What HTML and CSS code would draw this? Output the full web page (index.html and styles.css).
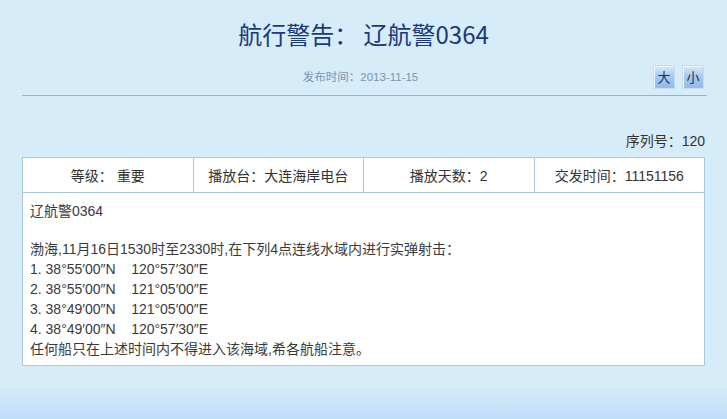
FILE: index.html
```html
<!DOCTYPE html>
<html lang="zh">
<head>
<meta charset="utf-8">
<title>航行警告： 辽航警0364</title>
<link rel="stylesheet" href="styles.css">
</head>
<body>
<div class="page">
  <h1 class="title">航行警告： 辽航警0364</h1>
  <div class="meta">
    <span class="date">发布时间：2013-11-15</span>
    <div class="sizes">
      <button class="size-btn">大</button>
      <button class="size-btn">小</button>
    </div>
  </div>
  <div class="serial">序列号：120</div>
  <table class="notice">
    <tr class="head">
      <td>等级： 重要</td>
      <td>播放台：大连海岸电台</td>
      <td>播放天数：2</td>
      <td>交发时间：11151156</td>
    </tr>
    <tr>
      <td colspan="4" class="body">
        <p class="code">辽航警0364</p>
        <p>渤海,11月16日1530时至2330时,在下列4点连线水域内进行实弹射击：<br>
        1. 38°55′00″N&nbsp;&nbsp;&nbsp;&nbsp;120°57′30″E<br>
        2. 38°55′00″N&nbsp;&nbsp;&nbsp;&nbsp;121°05′00″E<br>
        3. 38°49′00″N&nbsp;&nbsp;&nbsp;&nbsp;121°05′00″E<br>
        4. 38°49′00″N&nbsp;&nbsp;&nbsp;&nbsp;120°57′30″E<br>
        任何船只在上述时间内不得进入该海域,希各航船注意。</p>
      </td>
    </tr>
  </table>
</div>
</body>
</html>
```

FILE: styles.css
```css
html, body {
  margin: 0;
  height: 100%;
}
body {
  background: linear-gradient(to bottom, #d6ecf9 0, #d6ecf9 385px, #c0dcf8 419px);
  font-family: "Liberation Sans", Arial, "Noto Sans CJK SC", sans-serif;
  color: #333;
}
.page {
  padding: 0 22px 0 22px;
}
.title {
  margin: 0;
  padding-top: 18px;
  height: 32px;
  line-height: 32px;
  text-align: center;
  font-size: 24px;
  font-weight: normal;
  color: #1a3a7c;
  font-family: "Noto Sans CJK SC", "Liberation Sans", sans-serif;
}
.meta {
  position: relative;
  margin-top: 16px;
  height: 29px;
  border-bottom: 1px solid #8db4d8;
  text-align: center;
  margin-right: -2px;
}
.date {
  display: inline-block;
  font-size: 11.5px;
  line-height: 16px;
  color: #7896b2;
  margin-left: -8px;
  padding-top: 3px;
}
.sizes {
  position: absolute;
  right: 3px;
  top: -1px;
  display: flex;
  gap: 7px;
}
.size-btn {
  width: 22px;
  height: 24px;
  padding: 0;
  border: 1px solid #c6dcf0;
  background: linear-gradient(to bottom, #d9eafa 0%, #a7cbef 45%, #90bce8 100%);
  color: #1a2f5e;
  font-size: 13px;
  line-height: 20px;
  font-family: "Noto Sans CJK SC", sans-serif;
  box-shadow: inset 1px 1px 0 #eef6fd;
}
.serial {
  margin-top: 37px;
  text-align: right;
  font-size: 14px;
  line-height: 17px;
  color: #333;
  padding-right: 0;
}
.notice {
  margin-top: 7px;
  width: 683px;
  border-collapse: collapse;
  background: #fff;
  table-layout: fixed;
}
.notice td {
  border: 1px solid #a6c9de;
}
.head td {
  height: 34px;
  text-align: center;
  font-size: 14px;
  color: #333;
  padding: 0;
}
.body {
  padding: 8px 8px 6px 7px;
  font-size: 14px;
  line-height: 20px;
  color: #3a3a3a;
  vertical-align: top;
}
.body p {
  margin: 0;
}
.body .code {
  margin-bottom: 18px;
}
```
